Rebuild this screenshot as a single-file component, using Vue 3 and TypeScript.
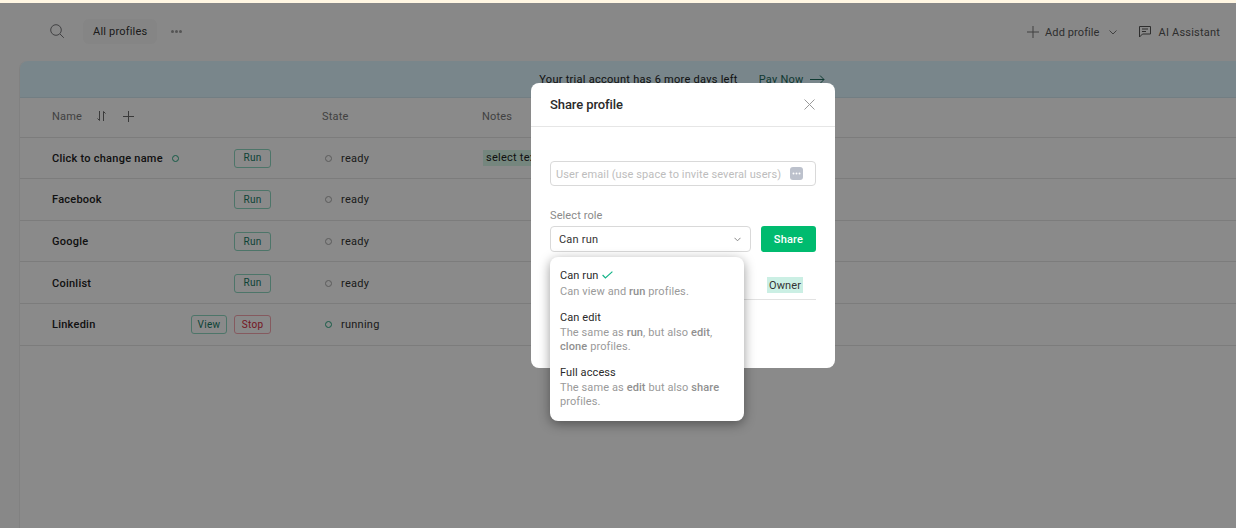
<script setup lang="ts">
interface Row { name: string; state: string; actions: { label: string; kind: string }[]; dot?: boolean; note?: string }
const rows: Row[] = [
  { name: 'Click to change name', state: 'ready', actions: [{ label: 'Run', kind: 'go' }], dot: true, note: 'select text' },
  { name: 'Facebook', state: 'ready', actions: [{ label: 'Run', kind: 'go' }] },
  { name: 'Google', state: 'ready', actions: [{ label: 'Run', kind: 'go' }] },
  { name: 'Coinlist', state: 'ready', actions: [{ label: 'Run', kind: 'go' }] },
  { name: 'Linkedin', state: 'running', actions: [{ label: 'View', kind: 'go' }, { label: 'Stop', kind: 'stop' }] },
]
</script>

<template>
  <div class="page">
    <header class="top">
      <svg class="search" width="15" height="15" viewBox="0 0 15 15" fill="none" stroke="#77777a" stroke-width="1">
        <circle cx="6" cy="6" r="5.300" /><path d="M10 10l3.800 3.800" />
      </svg>
      <span class="tab">All profiles</span>
      <span class="dots"><i></i><i></i><i></i></span>
      <span class="grow"></span>
      <svg class="plus" width="12" height="12" viewBox="0 0 12 12" fill="none" stroke="#777" stroke-width="1"><path d="M6 0v12M0 6h12" /></svg>
      <span class="act add">Add profile</span>
      <svg class="chev" width="8" height="5" viewBox="0 0 8 5" fill="none" stroke="#777" stroke-width="1"><path d="M.5.500l3.500 3.500 3.500-3.500" /></svg>
      <svg class="chat" width="12" height="12" viewBox="0 0 12 12" fill="none" stroke="#555" stroke-width="1">
        <path d="M.5.500h11v7.500H3.500L.5 11z" /><path d="M3 3h6M3 5.500h4" />
      </svg>
      <span class="act">AI Assistant</span>
    </header>

    <section class="card">
      <div class="banner">
        <span>Your trial account has 6 more days left</span>
        <span class="pay">Pay Now</span>
        <svg width="15" height="9" viewBox="0 0 15 9" fill="none" stroke="#1e6a5c" stroke-width="1"><path d="M0 4.500h14M10 .5l4 4-4 4" /></svg>
      </div>
      <div class="head">
        <div class="c-name">
          <span>Name</span>
          <svg class="sort" width="9" height="10" viewBox="0 0 9 10" fill="none" stroke="#6a6a6a" stroke-width="1"><path d="M2.500 0v9.500M.5 7.500l2 2M6.500 10V.5M6.500 .5l2 2" /></svg>
          <svg class="hplus" width="11" height="11" viewBox="0 0 11 11" fill="none" stroke="#6a6a6a" stroke-width="1"><path d="M5.500 0v11M0 5.500h11" /></svg>
        </div>
        <div class="c-state">State</div>
        <div class="c-notes">Notes</div>
      </div>
      <div v-for="r in rows" :key="r.name" class="row">
        <div class="c-name">
          <span class="rname">{{ r.name }}</span>
          <i v-if="r.dot" class="ring on namedot"></i>
          <span class="actions">
            <button v-for="a in r.actions" :key="a.label" class="mini" :class="a.kind">{{ a.label }}</button>
          </span>
        </div>
        <div class="c-state state">
          <i class="ring" :class="{ on: r.state === 'running' }"></i>{{ r.state }}
        </div>
        <div class="c-notes"><span v-if="r.note" class="note">{{ r.note }}</span></div>
      </div>
    </section>

    <div class="overlay"></div>

    <div class="modal">
      <div class="m-head">
        <span>Share profile</span>
        <svg width="11" height="11" viewBox="0 0 11 11" fill="none" stroke="#9a9a9a" stroke-width="1"><path d="M.5.5l10 10M10.500.5l-10 10" /></svg>
      </div>
      <div class="m-body">
        <div class="input">
          <span class="ph">User email (use space to invite several users)</span>
          <svg width="13" height="13" viewBox="0 0 13 13"><rect width="13" height="13" rx="3" fill="#bcc1cc" /><circle cx="3.500" cy="6.500" r="1" fill="#fff" /><circle cx="6.500" cy="6.500" r="1" fill="#fff" /><circle cx="9.500" cy="6.500" r="1" fill="#fff" /></svg>
        </div>
        <label class="lab">Select role</label>
        <div class="role-line">
          <div class="select">
            <span>Can run</span>
            <svg width="7" height="5" viewBox="0 0 7 5" fill="none" stroke="#888" stroke-width="1"><path d="M.5.800l3 3 3-3" /></svg>
          </div>
          <button class="share">Share</button>
        </div>
        <div class="member"><span class="owner">Owner</span></div>
      </div>

      <div class="menu">
        <div class="opt">
          <div class="t">Can run <svg class="tick" width="11" height="8" viewBox="0 0 11 8" fill="none" stroke="#15b488" stroke-width="1.200"><path d="M.6 4l2.800 3L10.400 .6" /></svg></div>
          <div class="d">Can view and <b>run</b> profiles.</div>
        </div>
        <div class="opt">
          <div class="t">Can edit</div>
          <div class="d">The same as <b>run</b>, but also <b>edit</b>, <b>clone</b> profiles.</div>
        </div>
        <div class="opt">
          <div class="t">Full access</div>
          <div class="d">The same as <b>edit</b> but also <b>share</b> profiles.</div>
        </div>
      </div>
    </div>
  </div>
</template>

<style>
html, body { margin: 0; background: #fff; overflow: hidden; }
</style>

<style scoped>
.page { width: 1236px; height: 528px; overflow: hidden; position: relative; font-family: Roboto, "Liberation Sans", sans-serif; font-size: 11px; color: #222; background: #f8f8f8; border-top: 3px solid #fff6e2; box-sizing: border-box; letter-spacing: .2px; }
.top { height: 57px; display: flex; align-items: center; padding: 0 16px 0 50px; box-sizing: border-box; }
.search { margin-right: 18px; }
.tab { background: #f2f2f2; border-radius: 6px; padding: 0 10px; height: 25px; line-height: 25px; color: #333; }
.dots { display: flex; gap: 1px; margin-left: 14px; }
.dots i { width: 3px; height: 3px; border-radius: 50%; background: #999; }
.grow { flex: 1; }
.act { color: #555; padding-top: 1px; }
.add { margin-left: 6px; letter-spacing: .1px; }
.plus { margin-top: 1px; }
.chev { margin-left: 9px; margin-right: 22px; margin-top: 1px; }
.chat { margin-right: 8px; }
.card { margin: 1px 0 0 19px; background: #fbfbfb; border-radius: 8px 0 0 0; border-left: 1px solid #ececec; height: 480px; }
.banner { height: 37px; background: #dcf4fd; border-radius: 8px 0 0 0; display: flex; align-items: center; justify-content: center; gap: 21px; color: #222; box-shadow: inset 0 -1px 0 #cfe6ee; padding-left: 108px; box-sizing: border-box; letter-spacing: .27px; }
.pay { color: #1e6a5c; margin-right: -15px; }
.head, .row { display: grid; grid-template-columns: 302px 160px 1fr; align-items: center; border-bottom: 1px solid #e2e2e2; box-sizing: border-box; }
.head { height: 39.600px; color: #777; padding-bottom: 2px; }
.row { height: 41.600px; padding-top: 1px; letter-spacing: .25px; }
.c-name { display: flex; align-items: center; padding-left: 32px; padding-right: 51px; }
.sort { margin-left: 15px; }
.hplus { margin-left: 17px; }
.rname { font-weight: 500; color: #222; }
.namedot { margin-left: 9px; }
.actions { margin-left: auto; display: flex; gap: 7px; }
.mini { height: 19px; width: 37px; padding: 0 0 1px; margin: 0; border-radius: 3px; background: transparent; font: inherit; font-size: 10px; line-height: 15px; box-sizing: border-box; letter-spacing: .3px; }
.mini:not(:last-child) { width: 36px; }
.mini.go { border: 1px solid #8cd6c0; color: #167a64; }
.mini.stop { border: 1px solid #f3a4ae; color: #d42a3d; }
.state { color: #333; padding-left: 3px; }
.ring { display: inline-block; width: 7px; height: 7px; border-radius: 50%; border: 1.300px solid #a7a7a7; box-sizing: border-box; margin-right: 9px; flex: none; }
.ring.on { border-color: #27a67f; }
.namedot { margin-right: 0; }
.note { display: inline-block; background: #d6f5e6; line-height: 16px; padding: 0 3px; margin-left: 1px; white-space: nowrap; }
.overlay { position: absolute; inset: 0; background: rgba(0, 0, 0, .45); }
.modal { position: absolute; left: 531px; top: 80px; width: 304px; height: 285px; background: #fff; border-radius: 8px; letter-spacing: .1px; }
.m-head { height: 44px; padding: 0 20px 0 19px; display: flex; align-items: center; justify-content: space-between; border-bottom: 1px solid #e6e6e6; font-size: 13px; font-weight: 500; color: #2a2a2a; box-sizing: border-box; letter-spacing: -.1px; }
.m-body { padding: 34px 19px 0; }
.input { height: 25px; border: 1px solid #d9d9d9; border-radius: 4px; display: flex; align-items: center; justify-content: space-between; padding: 0 12px 0 5px; box-sizing: border-box; color: #bdbdbd; }
.ph { padding-top: 1px; }
.lab { display: block; margin-top: 23px; color: #8a8a8a; line-height: 13px; }
.role-line { display: flex; gap: 10px; margin-top: 4px; }
.select { flex: 1; height: 26px; border: 1px solid #d9d9d9; border-radius: 4px; box-sizing: border-box; display: flex; align-items: center; justify-content: space-between; padding: 0 9px 0 8px; color: #333; letter-spacing: .2px; }
.share { width: 55px; height: 26px; border: 0; border-radius: 3px; background: #00bb6f; color: #fff; font: inherit; font-weight: 500; padding: 0; letter-spacing: .2px; }
.member { margin-top: 25px; height: 22px; border-bottom: 1px solid #e2e2e2; display: flex; justify-content: flex-end; padding-right: 13px; align-items: flex-start; }
.owner { background: #cbefe4; height: 16px; line-height: 17px; width: 36px; text-align: center; color: #333; }
.menu { position: absolute; left: 19px; top: 174px; width: 194px; height: 164px; background: #fff; border-radius: 8px; box-shadow: 0 3px 12px rgba(0, 0, 0, .4); padding: 12px 10px; box-sizing: border-box; }
.opt { margin-bottom: 12px; }
.t { color: #2a2a2a; line-height: 14px; display: flex; align-items: center; gap: 3px; }
.tick { margin-top: -2px; }
.d { color: #9a9a9a; line-height: 14px; margin-top: 1px; }
.opt:first-child .d { margin-top: 2px; }
.d b { font-weight: 500; color: #909090; }
</style>
